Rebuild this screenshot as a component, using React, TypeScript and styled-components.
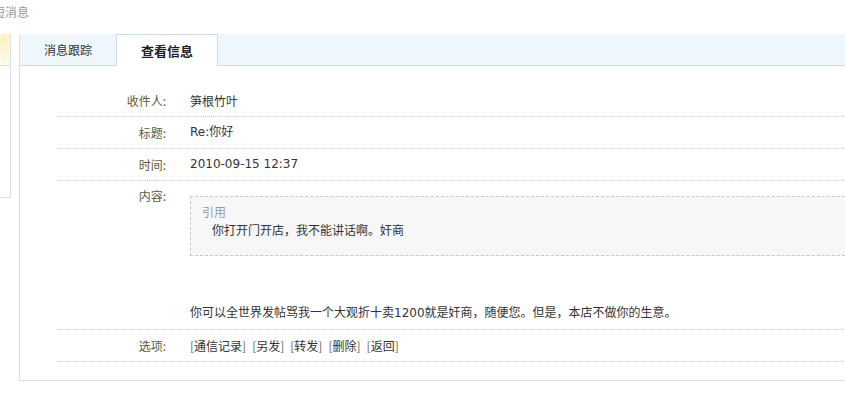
import React from "react";
import styled, { createGlobalStyle } from "styled-components";

const GlobalStyle = createGlobalStyle`
  html, body {
    margin: 0;
    padding: 0;
    background: #fff;
    overflow: hidden;
  }
  body {
    font-family: "DejaVu Sans", "Noto Sans CJK SC", sans-serif;
    font-size: 12px;
    color: #333;
  }
`;

const Page = styled.div`
  width: 845px;
  height: 395px;
  overflow: hidden;
`;

const Title = styled.div`
  height: 24px;
  line-height: 24px;
  margin-left: -7px;
  margin-bottom: 10px;
  color: #999;
  font-family: "Noto Sans CJK SC", sans-serif;
  font-size: 12px;
  white-space: nowrap;
`;

const Layout = styled.div`
  display: flex;
  align-items: flex-start;
  gap: 8px;
`;

const Sidebar = styled.div`
  width: 10px;
  flex: none;
  border-right: 1px solid #d3e2e8;
  border-bottom: 1px solid #d3e2e8;
`;

const SidebarHead = styled.div`
  height: 31px;
  background: linear-gradient(#fff1c4, #fffbea);
  border-bottom: 1px solid #d3e2e8;
`;

const SidebarBody = styled.div`
  height: 131px;
  background: #fff;
`;

const Panel = styled.div`
  width: 880px;
  flex: none;
  border-left: 1px solid #d3e2e8;
  border-bottom: 1px solid #d3e2e8;
`;

const TabBar = styled.div`
  display: flex;
  height: 31px;
  background: #eff7fd;
  border-bottom: 1px solid #cfdce3;
`;

const Tab = styled.div<{ $active?: boolean }>`
  height: 31px;
  line-height: 31px;
  padding: 0 24px;
  font-family: "Noto Sans CJK SC", sans-serif;
  font-size: ${(p) => (p.$active ? "13px" : "12px")};
  font-weight: ${(p) => (p.$active ? 700 : 400)};
  color: ${(p) => (p.$active ? "#222" : "#333")};
  background: ${(p) => (p.$active ? "#fff" : "transparent")};
  border: ${(p) => (p.$active ? "1px solid #cfdce3" : "none")};
  border-bottom: none;
  margin-bottom: ${(p) => (p.$active ? "-1px" : "0")};
  box-sizing: content-box;
`;

const Content = styled.div`
  padding: 19px 0 18px 37px;
`;

const Row = styled.div`
  display: grid;
  grid-template-columns: 121px 1fr;
  border-bottom: 1px dotted #c8c8c8;
`;

const Label = styled.div<{ $top?: boolean }>`
  text-align: right;
  padding: ${(p) => (p.$top ? "7px 12px 0 0" : "0 12px 0 0")};
  line-height: ${(p) => (p.$top ? "16px" : "31px")};
  color: #5c5c3d;
  font-family: "Noto Sans CJK SC", sans-serif;
  font-size: 12px;
`;

const Value = styled.div<{ $block?: boolean; $cjk?: boolean }>`
  padding: ${(p) => (p.$block ? "7px 0 8px 12px" : "0 0 0 12px")};
  line-height: ${(p) => (p.$block ? "16px" : "31px")};
  color: #333;
  white-space: nowrap;
  ${(p) => (p.$cjk ? 'font-family: "Noto Sans CJK SC", sans-serif;' : "")}
`;

const Quote = styled.div`
  margin-top: 8px;
  margin-bottom: 49px;
  padding: 6px 11px 16px;
  border: 1px dashed #c8c8c8;
  background: #f7f7f7;
  line-height: 18px;
  font-family: "Noto Sans CJK SC", sans-serif;
`;

const QuoteTitle = styled.div`
  color: #999;
`;

const QuoteText = styled.div`
  padding-left: 10px;
  color: #333;
`;

const Message = styled.div`
  line-height: 16px;
  font-family: "DejaVu Sans", "Noto Sans CJK SC", sans-serif;
`;

const Options = styled.div`
  display: flex;
  gap: 6px;
  font-family: "Noto Sans CJK SC", sans-serif;
`;

const Link = styled.a`
  color: #333;
  text-decoration: none;
  cursor: pointer;
`;

const Bracket = styled.span`
  color: #6b6b50;
`;

const options = ["通信记录", "另发", "转发", "删除", "返回"];

export default function App() {
  return (
    <Page>
      <GlobalStyle />
      <Title>短消息</Title>
      <Layout>
        <Sidebar>
          <SidebarHead />
          <SidebarBody />
        </Sidebar>
        <Panel>
          <TabBar>
            <Tab>消息跟踪</Tab>
            <Tab $active>查看信息</Tab>
          </TabBar>
          <Content>
            <Row>
              <Label>收件人:</Label>
              <Value $cjk>笋根竹叶</Value>
            </Row>
            <Row>
              <Label>标题:</Label>
              <Value>Re:你好</Value>
            </Row>
            <Row>
              <Label>时间:</Label>
              <Value>2010-09-15 12:37</Value>
            </Row>
            <Row>
              <Label $top>内容:</Label>
              <Value $block>
                <Quote>
                  <QuoteTitle>引用</QuoteTitle>
                  <QuoteText>你打开门开店，我不能讲话啊。奸商</QuoteText>
                </Quote>
                <Message>
                  你可以全世界发帖骂我一个大观折十卖1200就是奸商，随便您。但是，本店不做你的生意。
                </Message>
              </Value>
            </Row>
            <Row>
              <Label>选项:</Label>
              <Value>
                <Options>
                  {options.map((o) => (
                    <Link key={o}>
                      <Bracket>[</Bracket>
                      {o}
                      <Bracket>]</Bracket>
                    </Link>
                  ))}
                </Options>
              </Value>
            </Row>
          </Content>
        </Panel>
      </Layout>
    </Page>
  );
}
